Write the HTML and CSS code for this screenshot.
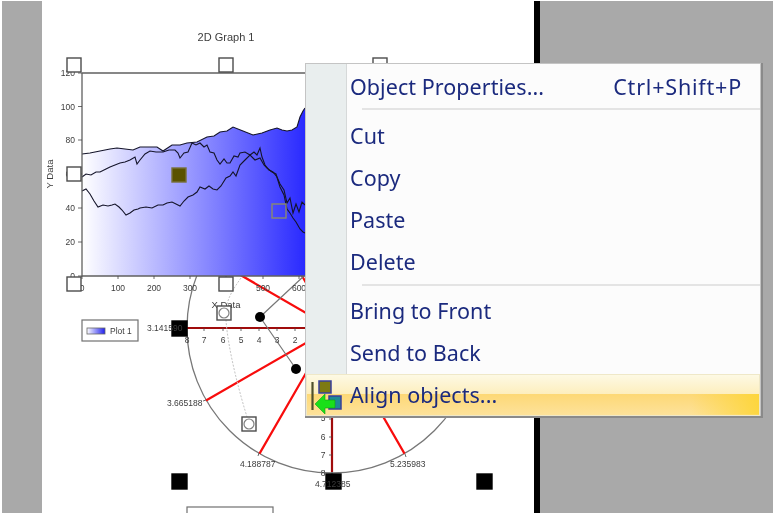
FILE: index.html
```html
<!DOCTYPE html>
<html lang="en">
<head>
  <meta charset="UTF-8">
  <title>2D Graph context menu</title>
  <link rel="stylesheet" href="styles.css">
</head>
<body>
  <div class="workspace">
    <div class="margin"></div>

    <!-- The sheet: everything on it is a free canvas -->
    <div class="sheet">
      <svg class="canvas" width="492" height="512" viewBox="42 1 492 512">
        <defs>
          <linearGradient id="fill" x1="82" x2="305" y1="0" y2="0" gradientUnits="userSpaceOnUse">
            <stop offset="0" stop-color="#ffffff"/>
            <stop offset="1" stop-color="#2a2aff"/>
          </linearGradient>
          <linearGradient id="swatch">
            <stop offset="0" stop-color="#ffffff"/>
            <stop offset="1" stop-color="#2020f0"/>
          </linearGradient>
        </defs>

        <!-- Polar graph -->
        <circle class="rim" cx="332" cy="328" r="145"/>
        <path class="spoke" d="M332 328L206 400.500M332 328L259.500 453.600M332 328L404.500 453.600M332 328L206 255M332 328L259.500 202"/>
        <path class="spoke dark" d="M187 328H332V472"/>
        <path class="tick" d="M183 328h4M203 401l3 -1M258 456l1 -3M405 454l1 3M332 472v3M204 328v3M223 328v3M241 328v3M259 328v3M277 328v3M295 328v3M332 455h-3M332 437h-3M332 419h-3"/>
        <path class="link" d="M260 317L305 275M260 317L296 369"/>
        <path class="dotted" d="M241 278C228 296 225 305 226 320C228 350 240 395 248 420"/>
        <circle class="dot" cx="260" cy="317" r="5"/>
        <circle class="dot" cx="296" cy="369" r="5"/>

        <rect class="grip solid" x="172" y="321" width="15" height="15"/>
        <rect class="grip solid" x="172" y="474" width="15" height="15"/>
        <rect class="grip solid" x="326" y="474" width="15" height="15"/>
        <rect class="grip solid" x="477" y="474" width="15" height="15"/>

        <text class="lbl" x="147" y="331">3.141590</text>
        <text class="lbl" x="167" y="406">3.665188</text>
        <text class="lbl" x="240" y="467">4.188787</text>
        <text class="lbl" x="390" y="467">5.235983</text>
        <text class="lbl" x="315" y="487">4.712385</text>
        <g class="lbl mid">
          <text x="187" y="343">8</text><text x="204" y="343">7</text><text x="223" y="343">6</text>
          <text x="241" y="343">5</text><text x="259" y="343">4</text><text x="277" y="343">3</text>
          <text x="295" y="343">2</text>
          <text x="323" y="421">5</text><text x="323" y="440">6</text><text x="323" y="458">7</text>
          <text x="323" y="476">8</text>
        </g>

        <!-- Curve graph, it sits over the polar one -->
        <rect class="plot-bg" x="82" y="73" width="223" height="203"/>
        <path class="area" d="M82 154L90 153L100 151L110 149L117 148L125 149L133 150L140 147L150 147L157 147L163 151L172 145L180 145L187 143L197 142L207 137L214 136L220 132L227 131L233 127L243 131L253 135L262 133L270 130L277 128L282 130L287 131L292 130L297 127L300 117L303 111L305 108V276H82Z"/>
        <path class="curve" d="M82 154L90 153L100 151L110 149L117 148L125 149L133 150L140 147L150 147L157 147L163 151L172 145L180 145L187 143L197 142L207 137L214 136L220 132L227 131L233 127L243 131L253 135L262 133L270 130L277 128L282 130L287 131L292 130L297 127L300 117L303 111L305 108"/>
        <path class="curve" d="M82 177L86 174L91 175L96 172L100 172L106 169L110 167L115 165L120 163L125 162L130 160L135 157L137 164L140 160L145 154L150 151L156 152L163 152L169 150L175 150L178 153L180 158L184 153L188 152L192 143L196 145L200 143L204 147L207 145L210 152L214 153L217 160L220 164L224 159L227 163L230 163L234 156L238 157L240 153L245 152L250 155L254 152L257 155L260 148L262 157L265 165L269 170L273 172L277 177L280 184L284 190L287 203L290 198L293 213L296 204L299 212L302 202L305 205"/>
        <path class="curve" d="M82 191L86 189L90 194L94 201L98 207L103 205L108 206L112 205L115 204L119 207L122 210L126 215L130 213L134 210L138 209L140 208L146 207L152 208L158 205L163 205L167 203L172 202L176 204L180 206L184 201L188 197L193 195L197 192L200 187L205 189L209 186L213 189L217 190L221 186L226 178L230 176L233 172L236 176L240 165L245 160L250 155L255 160L260 158L264 165L267 168L272 172L276 174L280 187L284 195L287 209L290 213L293 218L296 222L300 229L303 232L305 233"/>
        <path class="axis" d="M82 73H305M82 73V276H305"/>
        <path class="tick" d="M78 73h4M78 106.500h4M78 140h4M78 174h4M78 208h4M78 242h4M78 276h4M82 276v3M118 276v3M154 276v3M190 276v3M226 276v3M263 276v3M299 276v3"/>

        <text class="lbl title mid" x="226" y="41">2D Graph 1</text>
        <g class="lbl end">
          <text x="75" y="76">120</text><text x="75" y="110">100</text><text x="75" y="143">80</text>
          <text x="75" y="177">60</text><text x="75" y="211">40</text><text x="75" y="245">20</text>
          <text x="75" y="279">0</text>
        </g>
        <g class="lbl mid">
          <text x="82" y="291">0</text><text x="118" y="291">100</text><text x="154" y="291">200</text>
          <text x="190" y="291">300</text><text x="226" y="291">400</text><text x="263" y="291">500</text>
          <text x="299" y="291">600</text>
        </g>
        <text class="lbl axis-name mid" x="226" y="308">X Data</text>
        <text class="lbl axis-name mid" transform="translate(53 174) rotate(-90)">Y Data</text>

        <!-- Legend -->
        <rect class="legend" x="82" y="320" width="56" height="21"/>
        <rect class="legend-key" x="87" y="328" width="18" height="6"/>
        <text class="lbl" x="110" y="334">Plot 1</text>
        <rect class="legend" x="187" y="507" width="86" height="12"/>

        <!-- Selection handles -->
        <rect class="grip" x="67" y="58" width="14" height="14"/>
        <rect class="grip" x="219" y="58" width="14" height="14"/>
        <rect class="grip" x="373" y="58" width="14" height="14"/>
        <rect class="grip" x="67" y="167" width="14" height="14"/>
        <rect class="grip" x="67" y="277" width="14" height="14"/>
        <rect class="grip" x="219" y="277" width="14" height="14"/>
        <rect class="grip olive" x="172" y="168" width="14" height="14"/>
        <rect class="grip hollow" x="272" y="204" width="14" height="14"/>
        <rect class="grip" x="217" y="306" width="14" height="14"/>
        <circle class="ring" cx="224" cy="313" r="5"/>
        <rect class="grip" x="242" y="417" width="14" height="14"/>
        <circle class="ring" cx="249" cy="424" r="5"/>
      </svg>
    </div>

    <div class="sheet-shadow"></div>
    <div class="margin wide"></div>
  </div>

  <div class="context-menu">
    <div class="menu-item"><span>Object Properties...</span><span class="shortcut">Ctrl+Shift+P</span></div>
    <div class="menu-sep first"></div>
    <div class="menu-item">Cut</div>
    <div class="menu-item">Copy</div>
    <div class="menu-item">Paste</div>
    <div class="menu-item">Delete</div>
    <div class="menu-sep"></div>
    <div class="menu-item">Bring to Front</div>
    <div class="menu-item">Send to Back</div>
    <div class="menu-item active">
      <svg class="menu-icon" width="34" height="36" viewBox="0 0 34 36">
        <path d="M1.500 3V31" fill="none" stroke="#4f4f2c" stroke-width="2.200"/>
        <rect x="8" y="2" width="12" height="12" fill="#7d7a12" stroke="#3a3f9a" stroke-width="1.500"/>
        <rect x="18" y="17" width="12" height="13" fill="#1f8a94" stroke="#3a3f9a" stroke-width="1.500"/>
        <path d="M4 25L14 15V21H24V29H14V35Z" fill="#19e019" stroke="#12a012" stroke-width=".6"/>
      </svg>
      Align objects...
    </div>
  </div>
</body>
</html>
```

FILE: styles.css
```css
html, body {
  margin: 0;
  height: 100%;
  background: #ffffff;
  overflow: hidden;
}
.workspace {
  display: flex;
  height: 512px;
  margin: 1px 2px 1px 2px;
  filter: blur(0.4px);
}
.margin {
  width: 40px;
  background-color: #a9a9a9;
}
.margin.wide {
  width: 233px;
}
.sheet {
  width: 492px;
  background: white;
}
.sheet-shadow {
  width: 6px;
  background: black;
}
.canvas {
  display: block;
}

/* chart parts */
.axis {
  fill: none;
  stroke: #606060;
  stroke-width: 1.300;
}
.tick {
  fill: none;
  stroke: #444444;
  stroke-width: 0.8;
}
.plot-bg {
  fill: white;
}
.area {
  fill: url(#fill);
}
.curve {
  fill: none;
  stroke: #14142a;
  stroke-width: 1.100;
}
.rim {
  fill: white;
  stroke: #777777;
  stroke-width: 1.300;
}
.spoke {
  fill: none;
  stroke: #f80c0c;
  stroke-width: 2.200;
}
.spoke.dark {
  stroke: #a00c0c;
}
.link {
  fill: none;
  stroke: #777777;
  stroke-width: 1.200;
}
.dotted {
  fill: none;
  stroke: #c4c4c4;
  stroke-width: 1;
  stroke-dasharray: 2 1.500;
}
.dot {
  fill: black;
}
.ring {
  fill: white;
  stroke: #808080;
  stroke-width: 1.200;
}
.grip {
  fill: white;
  stroke: #4c4c4c;
  stroke-width: 1.400;
}
.grip.solid {
  fill: black;
  stroke: black;
}
.grip.olive {
  fill: #5a5200;
  stroke: #77703a;
}
.grip.hollow {
  fill: none;
  stroke: #8a8a70;
}
.legend {
  fill: white;
  stroke: #707070;
  stroke-width: 1.200;
}
.legend-key {
  fill: url(#swatch);
  stroke: #666666;
  stroke-width: 0.8;
}
.lbl {
  font-family: "Liberation Sans", Arial, sans-serif;
  font-size: 8.500px;
  fill: #3c3c3c;
}
.mid {
  text-anchor: middle;
}
.end {
  text-anchor: end;
}
.title {
  font-size: 11px;
}
.axis-name {
  font-size: 9.500px;
}

/* context menu */
.context-menu {
  position: absolute;
  left: 305px;
  top: 63px;
  width: 456px;
  height: 353px;
  box-sizing: border-box;
  padding-top: 2px;
  border: 1px solid #c4c4c4;
  box-shadow: 1px 1px 0 1px #8a8a8a;
  background: linear-gradient(to right, #e9eeee 40px, #d6d9d9 40px, #d6d9d9 41px, #fcfcfc 41px);
  font-family: "Noto Sans", "Open Sans", sans-serif;
  font-size: 21.500px;
  letter-spacing: 0.05px;
  color: #1b2a7e;
  filter: blur(0.3px);
}
.menu-item {
  display: flex;
  align-items: center;
  justify-content: space-between;
  height: 41.800px;
  padding: 0 18px 0 44px;
}
.shortcut {
  letter-spacing: 0.8px;
}
.menu-sep {
  height: 2px;
  margin: 2px 0 4px 56px;
  background-color: #e4e4e4;
}
.menu-sep.first {
  margin: 0 0 5px 56px;
}
.menu-item.active {
  position: relative;
  justify-content: flex-start;
  box-sizing: border-box;
  height: 42px;
  padding-left: 43px;
  border: 1px solid #efe8c8;
  background:
    linear-gradient(to right, rgba(253, 213, 53, 0) 85%, rgba(253, 213, 53, 0.9) 100%) 0 100% / 100% 52% no-repeat,
    linear-gradient(to bottom, #fdf9e4, #fdeebd 48%, #fdd876 48%, #fde29a 100%);
}
.menu-icon {
  position: absolute;
  left: 4px;
  top: 4px;
}
```
